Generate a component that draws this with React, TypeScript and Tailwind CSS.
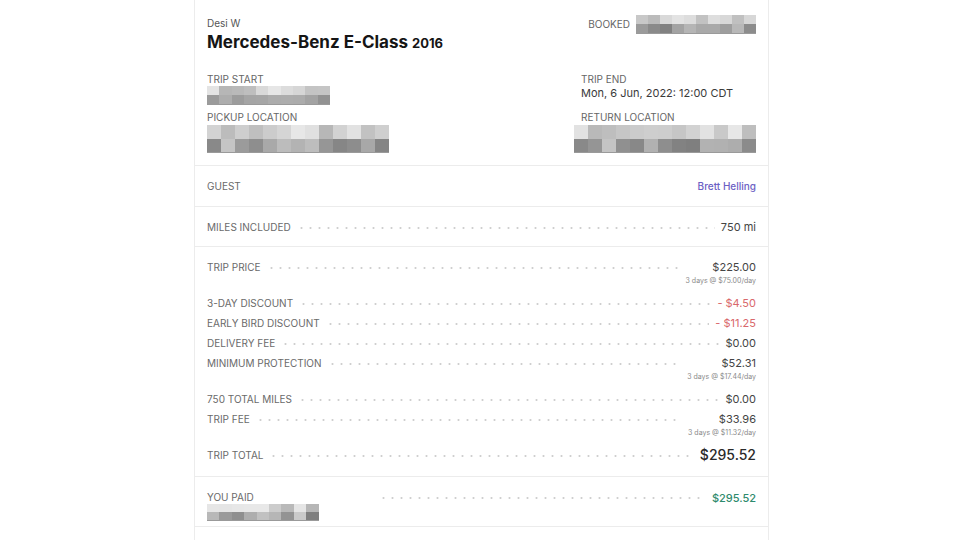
import React from "react";

type Line = {
  label: string;
  value: string;
  sub?: string;
  tone?: "red" | "total";
};

const priceLines: Line[] = [
  { label: "TRIP PRICE", value: "$225.00", sub: "3 days @ $75.00/day" },
  { label: "3-DAY DISCOUNT", value: "- $4.50", tone: "red" },
  { label: "EARLY BIRD DISCOUNT", value: "- $11.25", tone: "red" },
  { label: "DELIVERY FEE", value: "$0.00" },
  { label: "MINIMUM PROTECTION", value: "$52.31", sub: "3 days @ $17.44/day" },
  { label: "750 TOTAL MILES", value: "$0.00" },
  { label: "TRIP FEE", value: "$33.96", sub: "3 days @ $11.32/day" },
  { label: "TRIP TOTAL", value: "$295.52", tone: "total" },
];

// blurred / pixelated text block
const Mosaic = ({
  cols,
  rows,
  cw,
  ch,
  seed,
}: {
  cols: number;
  rows: number;
  cw: number;
  ch: number;
  seed: number;
}) => {
  let s = seed;
  const rand = () => {
    s = (s * 9301 + 49297) % 233280;
    return s / 233280;
  };
  const grid = [];
  for (let r = 0; r < rows; r++) {
    const cells = [];
    for (let c = 0; c < cols; c++) {
      const base = r === 0 ? 232 : 205;
      const g = Math.round(base - rand() * (r === 0 ? 50 : 80));
      cells.push(
        <div
          key={c}
          style={{ width: cw, height: ch, background: `rgb(${g},${g},${g})` }}
        />
      );
    }
    grid.push(
      <div key={r} className="flex">
        {cells}
      </div>
    );
  }
  return (
    <div className="flex flex-col w-fit border-b border-[#9a9a9a]">{grid}</div>
  );
};

const Leader = () => (
  <div className="flex-1 h-[4px] mx-[6px] mt-[9px] bg-[radial-gradient(circle,#cfcfcf_0.8px,transparent_1.3px)] bg-[length:9px_4px] bg-repeat-x" />
);

const PriceRow = ({ line }: { line: Line }) => {
  const valueClass =
    line.tone === "red"
      ? "text-[#d9686c] text-[11px]"
      : line.tone === "total"
      ? "text-[#2a2a2a] text-[14px] font-medium"
      : "text-[#444] text-[11px]";
  return (
    <div className="flex items-start">
      <div className="text-[10px] leading-[20px] text-[#6a6a6a]">{line.label}</div>
      <Leader />
      <div className="flex flex-col items-end">
        <div className={`leading-[20px] ${valueClass}`}>{line.value}</div>
        {line.sub && (
          <div className="text-[7px] leading-[8px] pb-[8px] text-[#8a8a8a]">
            {line.sub}
          </div>
        )}
      </div>
    </div>
  );
};

const App = () => {
  return (
    <div
      className="w-[960px] h-[540px] overflow-hidden bg-white"
      style={{ fontFamily: "Inter, 'Liberation Sans', sans-serif" }}
    >
      <div className="w-[575px] ml-[194px] border-x border-[#ececec] h-full">
        {/* header */}
        <div className="h-[166px] px-3 pt-[16px] border-b border-[#ececec]">
          <div className="flex justify-between">
            <div>
              <div className="text-[10px] leading-[14px] text-[#555]">Desi W</div>
              <div className="text-[#151515] font-bold text-[17px] leading-[24px]">
                Mercedes-Benz E-Class <span className="text-[13px]">2016</span>
              </div>
            </div>
            <div className="flex items-center gap-[6px] h-[20px] -mt-[2px]">
              <span className="text-[10px] text-[#666]">BOOKED</span>
              <Mosaic cols={10} rows={2} cw={12} ch={9} seed={11} />
            </div>
          </div>
          <div className="flex mt-[17px]">
            <div className="flex-1">
              <div className="text-[10px] leading-[14px] text-[#666]">TRIP START</div>
              <Mosaic cols={10} rows={2} cw={12.3} ch={9} seed={47} />
              <div className="text-[10px] leading-[14px] text-[#666] mt-[5px]">
                PICKUP LOCATION
              </div>
              <div className="mt-[1px]">
                <Mosaic cols={13} rows={2} cw={14} ch={13.5} seed={5} />
              </div>
            </div>
            <div className="w-[175px] flex flex-col">
              <div className="text-[10px] leading-[14px] text-[#666]">TRIP END</div>
              <div className="text-[11px] leading-[16px] text-[#3a3a3a] -mt-[1px]">
                Mon, 6 Jun, 2022: 12:00 CDT
              </div>
              <div className="text-[10px] leading-[14px] text-[#666] mt-[9px]">
                RETURN LOCATION
              </div>
              <div className="mt-[1px] self-end">
                <Mosaic cols={13} rows={2} cw={14} ch={13.5} seed={23} />
              </div>
            </div>
          </div>
        </div>

        {/* guest */}
        <div className="h-[41px] px-3 flex items-center justify-between border-b border-[#ececec]">
          <span className="text-[10px] text-[#6a6a6a]">GUEST</span>
          <span className="text-[10px] font-medium text-[#6c5fc4]">Brett Helling</span>
        </div>

        {/* miles */}
        <div className="h-[40px] px-3 pt-[10px] border-b border-[#ececec]">
          <div className="flex items-start">
            <div className="text-[10px] leading-[20px] text-[#6a6a6a]">MILES INCLUDED</div>
            <Leader />
            <div className="text-[11px] leading-[20px] text-[#444]">750 mi</div>
          </div>
        </div>

        {/* prices */}
        <div className="px-3 pt-[10px] pb-[11px] border-b border-[#ececec]">
          {priceLines.map((line) => (
            <PriceRow key={line.label} line={line} />
          ))}
        </div>

        {/* paid */}
        <div className="h-[50px] px-3 pt-[13px] border-b border-[#ececec]">
          <div className="flex items-start">
            <div className="flex flex-col">
              <div className="text-[10px] leading-[14px] text-[#6a6a6a]">YOU PAID</div>
              <Mosaic cols={9} rows={2} cw={12.4} ch={8} seed={71} />
            </div>
            <div className="flex-1 h-[4px] ml-[60px] mr-[6px] mt-[6px] bg-[radial-gradient(circle,#cfcfcf_0.8px,transparent_1.3px)] bg-[length:9px_4px] bg-repeat-x" />
            <div className="text-[11px] leading-[16px] font-medium text-[#2e8b6d]">$295.52</div>
          </div>
        </div>
      </div>
    </div>
  );
};

export default App;
